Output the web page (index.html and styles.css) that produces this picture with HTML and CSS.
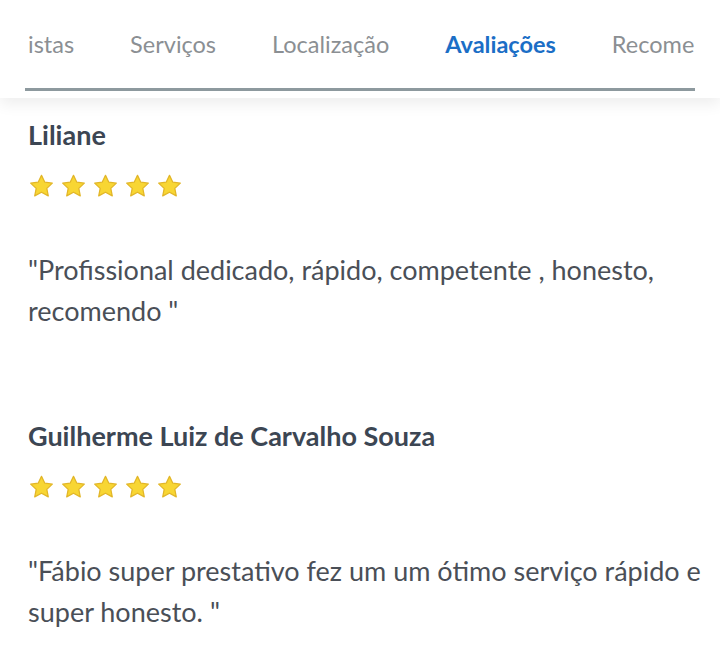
FILE: index.html
```html
<!DOCTYPE html>
<html lang="pt-BR">
<head>
<meta charset="utf-8">
<link rel="stylesheet" href="styles.css">
</head>
<body>
<header class="tabbar">
  <nav class="tabs">
    <div class="tab first">istas</div>
    <div class="tab">Serviços</div>
    <div class="tab">Localização</div>
    <div class="tab active">Avaliações</div>
    <div class="tab">Recome</div>
  </nav>
</header>
<svg width="0" height="0" class="defs">
  <defs>
    <symbol id="star" viewBox="0 0 24 24">
      <path d="M12 1.3l3.2 6.6 7.2.9-5.3 5 1.4 7.2L12 17.5l-6.5 3.5 1.4-7.2-5.3-5 7.2-.9z" fill="#f8d633" stroke="#e2b628" stroke-width="1.2" stroke-linejoin="round"/>
    </symbol>
  </defs>
</svg>
<main class="reviews">
  <section class="review">
    <h2 class="name">Liliane</h2>
    <div class="stars">
      <svg class="star"><use href="#star"/></svg>
      <svg class="star"><use href="#star"/></svg>
      <svg class="star"><use href="#star"/></svg>
      <svg class="star"><use href="#star"/></svg>
      <svg class="star"><use href="#star"/></svg>
    </div>
    <p class="text">"Profissional dedicado, rápido, competente , honesto, recomendo "</p>
  </section>
  <section class="review">
    <h2 class="name">Guilherme Luiz de Carvalho Souza</h2>
    <div class="stars">
      <svg class="star"><use href="#star"/></svg>
      <svg class="star"><use href="#star"/></svg>
      <svg class="star"><use href="#star"/></svg>
      <svg class="star"><use href="#star"/></svg>
      <svg class="star"><use href="#star"/></svg>
    </div>
    <p class="text">"Fábio super prestativo fez um um ótimo serviço rápido e super honesto. "</p>
  </section>
</main>
</body>
</html>
```

FILE: styles.css
```css
* { box-sizing: border-box; }
html, body { margin: 0; padding: 0; background: #fff; }
body { font-family: "Lato", "Liberation Sans", sans-serif; overflow: hidden; }

.defs { position: absolute; }

.tabbar {
  height: 98px;
  background: #fff;
  padding: 0 25px;
  box-shadow: 0 6px 14px rgba(0,0,0,0.07);
  position: relative;
  z-index: 1;
}
.tabs {
  display: flex;
  height: 91px;
  border-bottom: 3px solid #8d999e;
  overflow: hidden;
}
.tab {
  flex: none;
  padding: 0 28px;
  height: 90px;
  margin-bottom: -3px;
  display: flex;
  align-items: center;
  font-size: 23.5px;
  color: #8b8f93;
  line-height: 1;
}
.tab.first { padding-left: 3px; }
.tab.active {
  color: #1b6ec6;
  font-weight: 700;
  border-bottom: 3px solid #1d72cb;
  height: 91px;
  padding-top: 1px;
}

.reviews { padding: 21px 12px 0 28px; }
.review + .review { margin-top: 89px; }
.name {
  margin: 0;
  font-size: 27px;
  line-height: 31px;
  font-weight: 700;
  color: #3c4653;
}
.stars {
  display: flex;
  gap: 7px;
  margin-top: 24px;
  padding-left: 1px;
}
.star { width: 25px; height: 25px; display: block; }
.text {
  margin: 50px 0 0;
  font-size: 27px;
  line-height: 41px;
  color: #4a4f57;
}
```
